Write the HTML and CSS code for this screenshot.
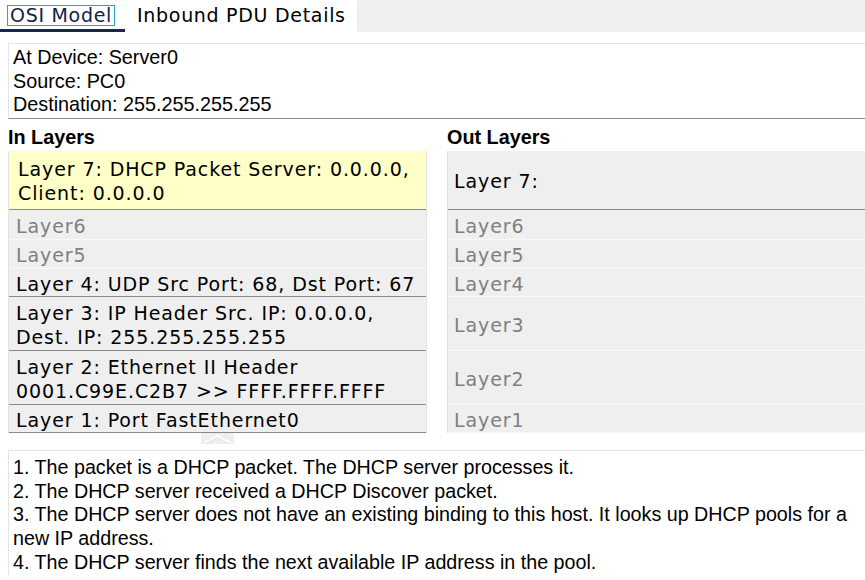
FILE: index.html
```html
<!DOCTYPE html>
<html>
<head>
<meta charset="utf-8">
<link rel="stylesheet" href="styles.css">
</head>
<body>
<div class="tabs">
  <div class="tabset">
    <div class="tab active"><span class="focus">OSI Model</span></div>
    <div class="tab">Inbound PDU Details</div>
  </div>
  <div class="tabfill"></div>
</div>
<div class="info">
  <div>At Device: Server0</div>
  <div>Source: PC0</div>
  <div>Destination: 255.255.255.255</div>
</div>
<div class="columns">
  <div class="col">
    <div class="colhead">In Layers</div>
    <div class="list">
      <div class="row r7 sel strong">Layer 7: DHCP Packet Server: 0.0.0.0, Client: 0.0.0.0</div>
      <div class="row r6 dim">Layer6</div>
      <div class="row r5 dim">Layer5</div>
      <div class="row r4 strong">Layer 4: UDP Src Port: 68, Dst Port: 67</div>
      <div class="row r3 strong">Layer 3: IP Header Src. IP: 0.0.0.0, Dest. IP: 255.255.255.255</div>
      <div class="row r2 strong">Layer 2: Ethernet II Header 0001.C99E.C2B7 &gt;&gt; FFFF.FFFF.FFFF</div>
      <div class="row r1 strong">Layer 1: Port FastEthernet0</div>
    </div>
  </div>
  <div class="col right">
    <div class="colhead">Out Layers</div>
    <div class="list">
      <div class="row r7 strong">Layer 7:</div>
      <div class="row r6 dim">Layer6</div>
      <div class="row r5 dim">Layer5</div>
      <div class="row r4 dim soft">Layer4</div>
      <div class="row r3 dim soft">Layer3</div>
      <div class="row r2 dim soft">Layer2</div>
      <div class="row r1 dim soft">Layer1</div>
    </div>
  </div>
</div>
<div class="handlebar">
  <div class="handle">
    <svg width="33" height="11" viewBox="0 0 33 11"><polyline points="3,10.5 16.5,3 30,10.5" fill="none" stroke="#ffffff" stroke-width="2"/><polyline points="3,11.5 16.5,4.5 30,11.5" fill="none" stroke="#e2e2e2" stroke-width="1"/></svg>
  </div>
</div>
<div class="desc">
  <div>1. The packet is a DHCP packet. The DHCP server processes it.</div>
  <div>2. The DHCP server received a DHCP Discover packet.</div>
  <div>3. The DHCP server does not have an existing binding to this host. It looks up DHCP pools for a new IP address.</div>
  <div>4. The DHCP server finds the next available IP address in the pool.</div>
</div>
</body>
</html>
```
FILE: styles.css
```css
html, body {
  margin: 0;
  padding: 0;
  background: #ffffff;
  width: 865px;
  height: 580px;
  overflow: hidden;
}
body {
  font-family: "DejaVu Sans", Verdana, sans-serif;
  color: #000;
}
.tabs {
  display: flex;
  height: 32px;
}
.tabset {
  display: flex;
  width: 357px;
  background: #fff;
}
.tabfill {
  flex: 1;
  background: #efefef;
}
.tab {
  font-size: 19px;
  letter-spacing: 0.7px;
  height: 32px;
  box-sizing: border-box;
  padding: 4px 0 0 0;
  line-height: 22px;
  white-space: nowrap;
}
.tab.active {
  width: 125px;
  border-bottom: 3px solid #102a52;
  padding-left: 7px;
  color: #0f2346;
}
.focus {
  display: inline-block;
  border: 1px solid #22a6dc;
  padding: 0 2px 0 2px;
  line-height: 19px;
}
.tab + .tab {
  padding-left: 12px;
}
.info {
  margin: 11px 0 0 8px;
  height: 76px;
  box-sizing: border-box;
  border-top: 1px solid #e4e4e4;
  border-left: 1px solid #e4e4e4;
  border-bottom: 1px solid #8a8a8a;
  padding: 2px 4px 0 4px;
  font-family: "Liberation Sans", Arial, sans-serif;
  font-size: 19.8px;
  line-height: 23.5px;
}
.columns {
  display: grid;
  grid-template-columns: 419px 418px;
  column-gap: 20px;
  margin-left: 8px;
}
.colhead {
  font-family: "Liberation Sans", Arial, sans-serif;
  font-weight: bold;
  font-size: 19.8px;
  height: 32px;
  line-height: 36px;
}
.list {
  border-left: 1px solid #e2e2e2;
  border-right: 1px solid #e2e2e2;
  background: #efefef;
}
.right .list {
  border-right: none;
}
.row {
  box-sizing: border-box;
  display: flex;
  align-items: center;
  padding: 2px 6px 0 7px;
  font-size: 19px;
  letter-spacing: 0.9px;
  line-height: 24px;
  border-bottom: 1px solid #f8f8f8;
}
.row.strong {
  border-bottom: 1px solid #8a8a8a;
}
.row.soft {
  border-bottom: 1px solid #f8f8f8;
}
.r7 { height: 59px; padding-left: 9px; }
.right .row { padding-left: 6px; }
.r6 { height: 30px; }
.r5 { height: 29px; }
.r4 { height: 28px; }
.r3 { height: 54px; }
.r2 { height: 54px; }
.r1 { height: 28px; }
.sel { background: #ffffc8; }
.dim { color: #7f7f7f; }
.handlebar {
  height: 17px;
  padding-left: 201px;
}
.handle {
  width: 33px;
  height: 11px;
  background: #efefef;
}
.handle svg { display: block; }
.desc {
  margin-left: 8px;
  border-top: 1px solid #e4e4e4;
  border-left: 1px solid #e4e4e4;
  padding: 5px 4px 0 4px;
  font-family: "Liberation Sans", Arial, sans-serif;
  font-size: 19.7px;
  line-height: 23.7px;
}
```
